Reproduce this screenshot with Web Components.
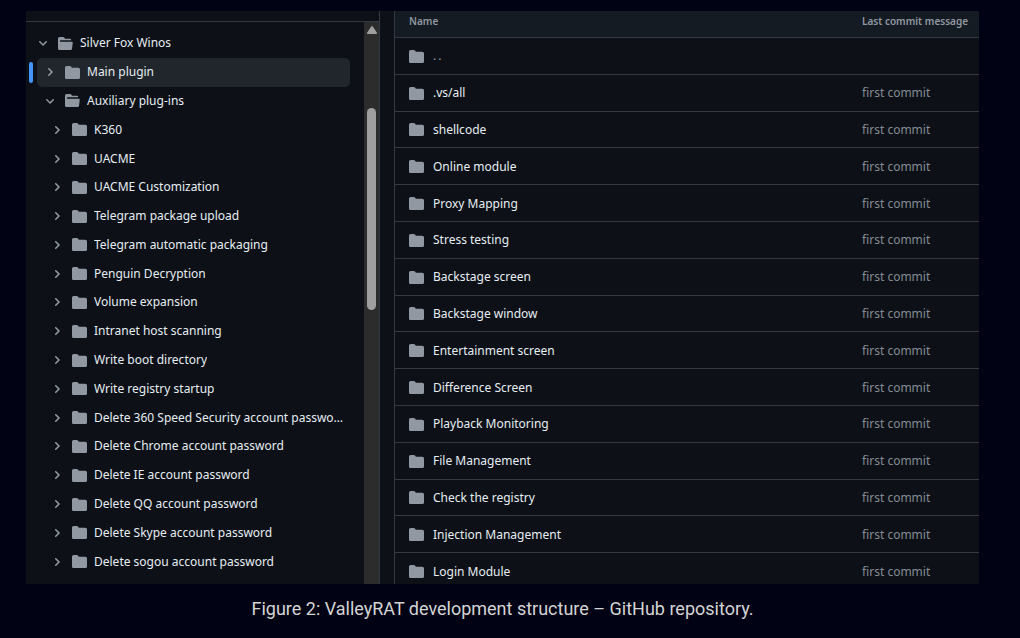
<!DOCTYPE html>
<html lang="en">
<head>
<meta charset="utf-8">
<meta name="viewport" content="width=device-width, initial-scale=1">
<title>ValleyRAT development structure</title>
<style>
    :root {
        --page-color: #010314;
        --panel-color: #0d1117;
        --header-color: #151b23;
        --selected-color: #21262d;
        --line-color: #343a42;
        --text-color: #e6edf3;
        --muted-color: #9198a1;
        --faint-color: #848b94;
        --accent-color: #4493f8;
    }
    body {
        margin: 0;
        background: var(--page-color);
        color: var(--text-color);
        font: 12px/16px "Noto Sans", "Open Sans", sans-serif;
    }
</style>
</head>
<body>
<repo-figure>
    <file-tree slot="tree">
        <tree-row level="0" open>Silver Fox Winos</tree-row>
        <tree-row level="1" selected>Main plugin</tree-row>
        <tree-row level="1" open>Auxiliary plug-ins</tree-row>
        <tree-row level="2">K360</tree-row>
        <tree-row level="2">UACME</tree-row>
        <tree-row level="2">UACME Customization</tree-row>
        <tree-row level="2">Telegram package upload</tree-row>
        <tree-row level="2">Telegram automatic packaging</tree-row>
        <tree-row level="2">Penguin Decryption</tree-row>
        <tree-row level="2">Volume expansion</tree-row>
        <tree-row level="2">Intranet host scanning</tree-row>
        <tree-row level="2">Write boot directory</tree-row>
        <tree-row level="2">Write registry startup</tree-row>
        <tree-row level="2">Delete 360 Speed Security account password</tree-row>
        <tree-row level="2">Delete Chrome account password</tree-row>
        <tree-row level="2">Delete IE account password</tree-row>
        <tree-row level="2">Delete QQ account password</tree-row>
        <tree-row level="2">Delete Skype account password</tree-row>
        <tree-row level="2">Delete sogou account password</tree-row>
    </file-tree>
    <commit-table slot="table"></commit-table>
    <span slot="caption">Figure 2: ValleyRAT development structure – GitHub repository.</span>
</repo-figure>

<script>
class FolderIcon extends HTMLElement {
    connectedCallback() {
        const closed = "M1.75 1A1.75 1.75 0 0 0 0 2.75v10.5C0 14.216.784 15 1.75 15h12.5A1.75 1.75 0 0 0 16 13.25v-8.5A1.75 1.75 0 0 0 14.25 3H7.5a.25.25 0 0 1-.2-.1l-.9-1.2C6.07 1.26 5.55 1 5 1H1.75Z";
        const opened = "M.513 1.513A1.75 1.75 0 0 1 1.75 1h3.5c.55 0 1.07.26 1.4.7l.9 1.2a.25.25 0 0 0 .2.1H13a1 1 0 0 1 1 1v.5H2.75a.75.75 0 0 0 0 1.5h11.978a1 1 0 0 1 .994 1.117L15 13.25A1.75 1.75 0 0 1 13.25 15H1.75A1.75 1.75 0 0 1 0 13.25V2.75c0-.464.184-.91.513-1.237Z";
        this.attachShadow({ mode: "open" });
        this.shadowRoot.innerHTML = `
            <style>
                :host {
                    display: block;
                    flex: none;
                    width: 15px;
                    height: 15px;
                    color: var(--muted-color);
                }
                svg {
                    display: block;
                    fill: currentColor;
                }
            </style>
            <svg width="15" height="15" viewBox="0 0 16 16" aria-hidden="true">
                <path d="${this.hasAttribute("open") ? opened : closed}"/>
            </svg>
        `;
    }
}

class TreeRow extends HTMLElement {
    connectedCallback() {
        const open = this.hasAttribute("open");
        this.style.setProperty("--level", this.getAttribute("level"));
        this.setAttribute("role", "treeitem");
        this.attachShadow({ mode: "open" });
        this.shadowRoot.innerHTML = `
            <style>
                :host {
                    display: flex;
                    position: relative;
                    min-width: 0;
                }
                button {
                    flex: 1;
                    min-width: 0;
                    display: flex;
                    align-items: center;
                    border: 0;
                    border-radius: 5px;
                    padding: 0 6px 0 calc(var(--level) * 7px);
                    background: none;
                    color: inherit;
                    font: inherit;
                    text-align: left;
                    cursor: pointer;
                }
                :host([selected]) button {
                    background: var(--selected-color);
                }
                :host([selected])::before {
                    content: "";
                    position: absolute;
                    left: -8px;
                    top: 4px;
                    bottom: 4px;
                    width: 4px;
                    border-radius: 3px;
                    background: var(--accent-color);
                }
                .chevron {
                    flex: none;
                    width: 12px;
                    height: 12px;
                    margin-right: 9px;
                    fill: var(--muted-color);
                }
                :host([open]) .chevron {
                    transform: rotate(90deg);
                }
                .label {
                    margin-left: 7px;
                    overflow: hidden;
                    white-space: nowrap;
                    text-overflow: ellipsis;
                }
            </style>
            <button type="button">
                <svg class="chevron" viewBox="0 0 12 12" aria-hidden="true">
                    <path d="M4.7 10c-.2 0-.4-.1-.5-.2-.3-.3-.3-.8 0-1.1L6.9 6 4.2 3.3c-.3-.3-.3-.8 0-1.1.3-.3.8-.3 1.1 0l3.3 3.2c.3.3.3.8 0 1.1L5.3 9.7c-.2.2-.4.3-.6.3Z"/>
                </svg>
                <folder-icon ${open ? "open" : ""}></folder-icon>
                <span class="label"><slot></slot></span>
            </button>
        `;
    }
}

class ScrollTrack extends HTMLElement {
    connectedCallback() {
        this.attachShadow({ mode: "open" });
        this.shadowRoot.innerHTML = `
            <style>
                :host {
                    display: grid;
                    grid-template-rows: 86px 202fr 274fr;
                    justify-items: center;
                    width: 15px;
                    background: #2c2c2c;
                }
                svg {
                    margin-top: 4px;
                    fill: #9f9f9f;
                }
                .thumb {
                    width: 9px;
                    border-radius: 5px;
                    background: #9f9f9f;
                }
            </style>
            <svg width="10" height="8" viewBox="0 0 10 8" aria-hidden="true">
                <path d="M4.2.6a1 1 0 0 1 1.6 0l4 5.8A1 1 0 0 1 9 8H1a1 1 0 0 1-.8-1.6Z"/>
            </svg>
            <div class="thumb"></div>
        `;
    }
}

class FileTree extends HTMLElement {
    connectedCallback() {
        this.attachShadow({ mode: "open" });
        this.shadowRoot.innerHTML = `
            <style>
                :host {
                    display: grid;
                    grid-template-columns: minmax(0, 1fr) auto;
                    margin-top: 10px;
                    border-top: 1px solid var(--line-color);
                }
                .rows {
                    display: grid;
                    grid-auto-rows: minmax(28px, 1fr);
                    padding: 7px 14px 8px 11px;
                }
            </style>
            <div class="rows" role="tree"><slot></slot></div>
            <scroll-track></scroll-track>
        `;
    }
}

class CommitTable extends HTMLElement {
    connectedCallback() {
        this.attachShadow({ mode: "open" });
        this._render();
    }

    _render() {
        const folders = [
            ".vs/all", "shellcode", "Online module", "Proxy Mapping", "Stress testing",
            "Backstage screen", "Backstage window", "Entertainment screen",
            "Difference Screen", "Playback Monitoring", "File Management",
            "Check the registry", "Injection Management", "Login Module",
        ];
        const row = (name, message) => `
            <tr>
                <td><a href="#"><folder-icon></folder-icon><span>${name}</span></a></td>
                <td>${message}</td>
            </tr>
        `;
        this.shadowRoot.innerHTML = `
            <style>
                :host {
                    display: flex;
                    flex-direction: column;
                    overflow: hidden;
                    border-left: 1px solid var(--line-color);
                }
                table {
                    flex: 1;
                    width: 100%;
                    margin-bottom: -5px;
                    table-layout: fixed;
                    border-spacing: 0;
                }
                th {
                    height: 18px;
                    padding: 1px 0 7px;
                    background: var(--header-color);
                    color: var(--muted-color);
                    font-size: 10px;
                    font-weight: 600;
                    text-align: left;
                }
                td {
                    padding: 1px 0 0;
                    border-top: 1px solid var(--line-color);
                    color: var(--faint-color);
                }
                th:first-child, td:first-child {
                    padding-left: 14px;
                }
                th:last-child {
                    width: 117px;
                    white-space: nowrap;
                }
                a {
                    display: flex;
                    align-items: center;
                    gap: 9px;
                    color: var(--text-color);
                    text-decoration: none;
                }
                tbody tr:first-child a {
                    color: var(--muted-color);
                    letter-spacing: 2px;
                }
            </style>
            <table>
                <thead>
                    <tr><th>Name</th><th>Last commit message</th></tr>
                </thead>
                <tbody>
                    ${row("..", "")}
                    ${folders.map((name) => row(name, "first commit")).join("")}
                </tbody>
            </table>
        `;
    }
}

class RepoFigure extends HTMLElement {
    connectedCallback() {
        this.attachShadow({ mode: "open" });
        this.shadowRoot.innerHTML = `
            <style>
                :host {
                    display: flex;
                    min-height: 100vh;
                }
                figure {
                    flex: 1;
                    display: flex;
                    flex-direction: column;
                    min-width: 0;
                    margin: 0;
                    padding: 11px 41px 0 26px;
                }
                .panel {
                    flex: 1;
                    display: grid;
                    grid-template-columns: 354px minmax(0, 1fr);
                    gap: 14px;
                    background: var(--panel-color);
                }
                .side {
                    display: grid;
                    border-right: 1px solid var(--line-color);
                }
                .main {
                    display: grid;
                }
                figcaption {
                    padding: 13px 0 17px;
                    color: #d4d4d4;
                    font: 18px/24px Roboto, sans-serif;
                    text-align: center;
                }
            </style>
            <figure>
                <div class="panel">
                    <div class="side"><slot name="tree"></slot></div>
                    <div class="main"><slot name="table"></slot></div>
                </div>
                <figcaption><slot name="caption"></slot></figcaption>
            </figure>
        `;
    }
}

customElements.define("folder-icon", FolderIcon);
customElements.define("tree-row", TreeRow);
customElements.define("scroll-track", ScrollTrack);
customElements.define("file-tree", FileTree);
customElements.define("commit-table", CommitTable);
customElements.define("repo-figure", RepoFigure);
</script>
</body>
</html>
